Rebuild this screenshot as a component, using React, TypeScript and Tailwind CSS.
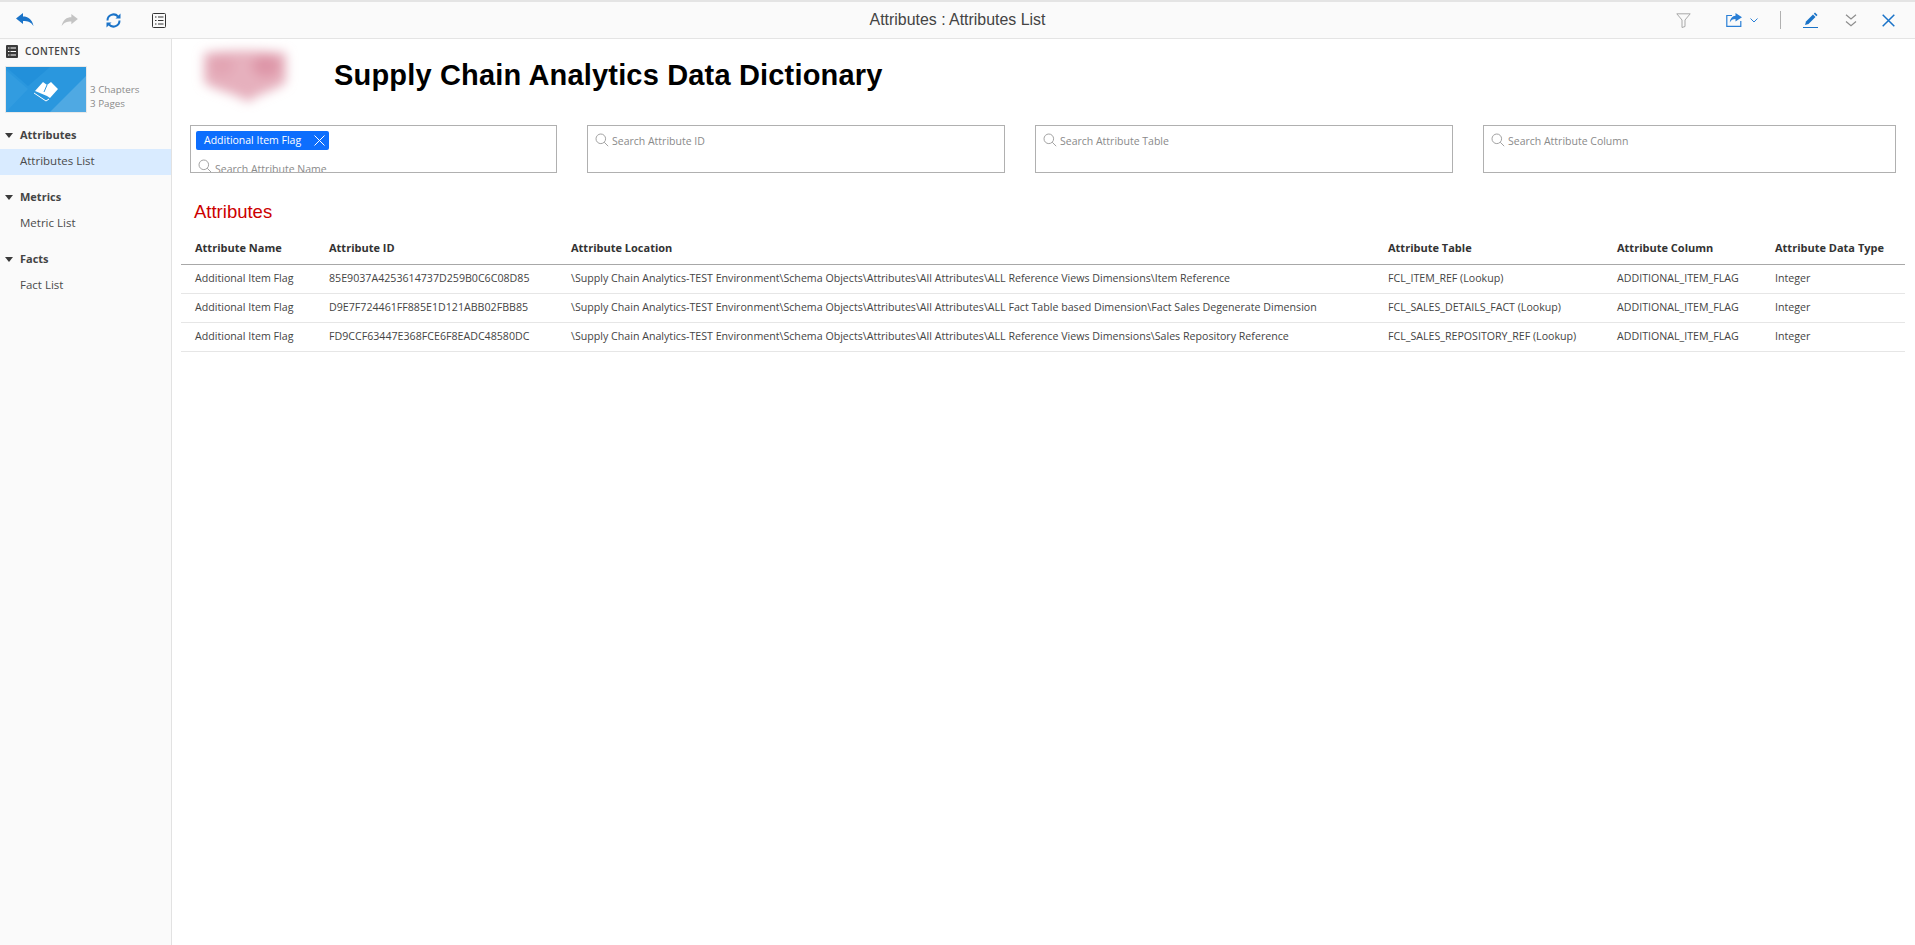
const rows = [
  ['Additional Item Flag', '85E9037A4253614737D259B0C6C08D85', '\\Supply Chain Analytics-TEST Environment\\Schema Objects\\Attributes\\All Attributes\\ALL Reference Views Dimensions\\Item Reference', 'FCL_ITEM_REF (Lookup)', 'ADDITIONAL_ITEM_FLAG', 'Integer'],
  ['Additional Item Flag', 'D9E7F724461FF885E1D121ABB02FBB85', '\\Supply Chain Analytics-TEST Environment\\Schema Objects\\Attributes\\All Attributes\\ALL Fact Table based Dimension\\Fact Sales Degenerate Dimension', 'FCL_SALES_DETAILS_FACT (Lookup)', 'ADDITIONAL_ITEM_FLAG', 'Integer'],
  ['Additional Item Flag', 'FD9CCF63447E368FCE6F8EADC48580DC', '\\Supply Chain Analytics-TEST Environment\\Schema Objects\\Attributes\\All Attributes\\ALL Reference Views Dimensions\\Sales Repository Reference', 'FCL_SALES_REPOSITORY_REF (Lookup)', 'ADDITIONAL_ITEM_FLAG', 'Integer'],
]

const headers = ['Attribute Name', 'Attribute ID', 'Attribute Location', 'Attribute Table', 'Attribute Column', 'Attribute Data Type']

const sections = [
  { title: 'Attributes', items: ['Attributes List'], active: true },
  { title: 'Metrics', items: ['Metric List'], active: false },
  { title: 'Facts', items: ['Fact List'], active: false },
]

function SearchIcon() {
  return (
    <svg width="14" height="14" viewBox="0 0 14 14" fill="none" stroke="#a3a3a3" strokeWidth="1" className="shrink-0">
      <circle cx="5.800" cy="5.800" r="4.800" />
      <path d="M9.200 9.200l4 4" />
    </svg>
  )
}

function ToolbarLeft() {
  return (
    <div className="flex items-center">
      <svg width="18" height="14" viewBox="0 0 18 14" className="ml-[16px]" fill="#1a73c8">
        <path d="M0 5.500 7 0v3.500c5 0 9 2.500 10.500 9.500-2.500-3.800-5.500-5-10.500-5V11z" />
      </svg>
      <svg width="17" height="13" viewBox="0 0 18 14" className="ml-[27px]" fill="#c4c4c4">
        <path d="M18 5.500 11 0v3.500C6 3.500 2 6 .5 13 3 9.200 6 8 11 8v3z" />
      </svg>
      <svg width="17" height="17" viewBox="0 0 17 17" className="ml-[27px]" fill="none" stroke="#1a73c8" strokeWidth="2">
        <path d="M2.500 8.500a6 6 0 0 1 10.500-4" />
        <path d="M14.500 8.500a6 6 0 0 1-10.500 4" />
        <path d="M15.500 1.500v5h-5z" fill="#1a73c8" stroke="none" />
        <path d="M1.500 15.500v-5h5z" fill="#1a73c8" stroke="none" />
      </svg>
      <svg width="14" height="15" viewBox="0 0 14 15" className="ml-[30px]" fill="none" stroke="#333" strokeWidth="1">
        <rect x="0.500" y="0.500" width="13" height="14" rx="1" />
        <path d="M3 4h1.500M6 4h5.500M3 7.500h1.500M6 7.500h5.500M3 11h1.500M6 11h5.500" />
      </svg>
    </div>
  )
}

function ToolbarRight() {
  return (
    <div className="flex items-center">
      <svg width="15" height="15" viewBox="0 0 15 15" fill="none" stroke="#a8a8a8" strokeWidth="1">
        <path d="M.8.800h13.400L9 7v6.500l-3 1V7z" />
      </svg>
      <svg width="18" height="14" viewBox="0 0 18 14" className="ml-[35px]" fill="none" stroke="#2a7fd6" strokeWidth="1.200">
        <path d="M6 2.500H.800v10.800h14V8" />
        <path d="M9.500 0 16 4.300 9.500 8.500V6C6.800 6 5 7 3.800 9.500 4.200 5.500 6.300 3 9.500 2.800z" fill="#2a7fd6" stroke="none" />
      </svg>
      <svg width="8" height="5" viewBox="0 0 8 5" className="ml-[6px]" fill="none" stroke="#2a7fd6" strokeWidth="1">
        <path d="M.5.500 4 4 7.500.500" />
      </svg>
      <div className="ml-[22px] h-[18px] w-px bg-[#b0b0b0]" />
      <svg width="15" height="16" viewBox="0 0 15 16" className="ml-[22px]" fill="#1a73c8">
        <path d="M3 9.500 10 2.500l2.500 2.500-7 7-3.500 1z" />
        <path d="M10.800 1.700 12 .500l2.500 2.500-1.200 1.200z" />
        <rect x="0" y="15" width="15" height="1" />
      </svg>
      <svg width="12" height="13" viewBox="0 0 12 13" className="ml-[27px]" fill="none" stroke="#8d8d8d" strokeWidth="1.200">
        <path d="M1 .800 6 5l5-4.200M1 7.500l5 4.200 5-4.200" />
      </svg>
      <svg width="13" height="13" viewBox="0 0 13 13" className="ml-[25px] mr-[20px]" fill="none" stroke="#1a73c8" strokeWidth="1.500">
        <path d="M.7.700l11.600 11.600M12.300.700.700 12.300" />
      </svg>
    </div>
  )
}

function Sidebar() {
  return (
    <aside className="w-[172px] shrink-0 border-r border-[#e2e2e2] bg-[#fafafa] pt-[5px]">
      <div className="flex items-center pl-[6px]">
        <svg width="12" height="13" viewBox="0 0 12 13">
          <rect width="12" height="13" rx="1" fill="#3a3a3a" />
          <path d="M2 3h1.500M4.500 3H10M2 6.500h1.500M4.500 6.500H10M2 10h1.500M4.500 10H10" stroke="#fff" strokeWidth="1" />
        </svg>
        <span className="ml-[7px] text-[10px] font-semibold leading-[14px] tracking-[0.4px] text-[#444]">CONTENTS</span>
      </div>
      <div className="mt-[8px] flex items-end pl-[5px]">
        <div className="relative h-[47px] w-[82px] overflow-hidden border border-[#e8e8e8] bg-[#2a97de]">
          <svg width="80" height="45" viewBox="0 0 80 45" className="absolute inset-0">
            <path d="M0 3 22 22 0 45z" fill="#329ce0" />
            <path d="M44 45 80 9v36z" fill="#4fa9e3" />
            <path d="M0 0h44L22 19z" fill="#2290da" />
            <path d="M29 24 37 15l4 3 4-3 7 7-8 9-3-2z" fill="#fff" />
            <path d="M41 18 38 25" fill="none" stroke="#2a97de" strokeWidth="1" />
            <path d="M28 26 40 34l3-2" fill="none" stroke="#fff" strokeWidth="1" />
          </svg>
        </div>
        <div className="mb-[2px] ml-[3px] text-[9.800px] leading-[14px] text-[#8a8a8a]">
          <div>3 Chapters</div>
          <div>3 Pages</div>
        </div>
      </div>
      <div className="mt-[10px] flex flex-col gap-[10px]">
        {sections.map((s) => (
          <div key={s.title}>
            <div className="mb-[2px] flex h-[24px] items-center pl-[5px]">
              <span className="h-0 w-0 border-x-[4px] border-t-[5px] border-x-transparent border-t-[#3a3a3a]" />
              <span className="ml-[7px] text-[11px] font-bold text-[#444]">{s.title}</span>
            </div>
            {s.items.map((item) => (
              <div key={item} className={`flex h-[26px] items-center pb-[2px] pl-[20px] text-[11.500px] text-[#4a4a4a] ${s.active ? 'bg-[#d9ebff]' : ''}`}>
                {item}
              </div>
            ))}
          </div>
        ))}
      </div>
    </aside>
  )
}

function SearchBox({ label, className }: { label: string; className: string }) {
  return (
    <div className={`h-[48px] border border-[#b0b0b0] px-[7px] pt-[7px] ${className}`}>
      <div className="flex items-start">
        <SearchIcon />
        <span className="ml-[3px] mt-[1px] text-[10.500px] leading-[14px] text-[#8a8a8a]">{label}</span>
      </div>
    </div>
  )
}

export default function App() {
  return (
    <div className="flex h-[945px] w-[1915px] flex-col overflow-hidden bg-white font-['Open_Sans',sans-serif]">
      <header className="relative flex h-[39px] shrink-0 items-center justify-between border-y border-[#e4e4e4] border-t-2 bg-[#fafafa]">
        <ToolbarLeft />
        <span className="absolute inset-x-0 text-center font-['Liberation_Sans',sans-serif] text-[15.900px] text-[#444]">Attributes : Attributes List</span>
        <ToolbarRight />
      </header>
      <div className="flex min-h-0 flex-1">
        <Sidebar />
        <main className="min-w-0 flex-1">
          <div className="flex h-[86px] items-center">
            <svg width="120" height="90" viewBox="0 0 120 90" className="ml-[12px] mt-[-6px] shrink-0">
              <defs>
                <filter id="logoBlur" x="-30%" y="-30%" width="160%" height="160%">
                  <feGaussianBlur stdDeviation="5.500" />
                </filter>
              </defs>
              <g filter="url(#logoBlur)">
                <path d="M20 19c20-3 58-3 82 0v29c-8 8-26 10-38 20-14-10-36-12-44-20z" fill="#e6b0bd" />
                <ellipse cx="82" cy="32" rx="14" ry="11" fill="#de96a8" />
                <ellipse cx="38" cy="32" rx="12" ry="10" fill="#e2a4b3" />
              </g>
            </svg>
            <h1 className="ml-[30px] mt-[-12px] font-['Liberation_Sans',sans-serif] text-[29px] font-bold tracking-[0.17px] text-black">Supply Chain Analytics Data Dictionary</h1>
          </div>
          <div className="ml-[18px] flex gap-[30px]">
            <div className="relative h-[48px] w-[367px] overflow-hidden border border-[#b0b0b0]">
              <div className="ml-[5px] mt-[5px] flex h-[19px] w-[133px] items-center rounded-[2px] bg-[#0d6efd] pl-[8px] text-[10.500px] text-white">
                Additional Item Flag
                <svg width="11" height="11" viewBox="0 0 11 11" className="ml-[13px]" fill="none" stroke="#fff" strokeWidth="1">
                  <path d="M.5.500l10 10M10.500.500l-10 10" />
                </svg>
              </div>
              <div className="mt-[9px] flex items-start pl-[7px]">
                <SearchIcon />
                <span className="ml-[3px] mt-[3px] text-[10.500px] leading-[14px] text-[#8a8a8a]">Search Attribute Name</span>
              </div>
            </div>
            <SearchBox label="Search Attribute ID" className="w-[418px]" />
            <SearchBox label="Search Attribute Table" className="w-[418px]" />
            <SearchBox label="Search Attribute Column" className="w-[413px]" />
          </div>
          <h2 className="ml-[22px] mt-[27px] font-['Liberation_Sans',sans-serif] text-[18.500px] leading-[24px] text-[#cc0000]">Attributes</h2>
          <table className="ml-[9px] mt-[9px] w-[1724px] table-fixed border-collapse text-[10.650px] text-[#444]">
            <colgroup>
              <col className="w-[134px]" />
              <col className="w-[242px]" />
              <col className="w-[817px]" />
              <col className="w-[229px]" />
              <col className="w-[158px]" />
              <col className="w-[144px]" />
            </colgroup>
            <thead>
              <tr className="h-[31px] border-b border-[#a8a8a8]">
                {headers.map((h) => (
                  <th key={h} className="pl-[14px] text-left text-[11px] font-bold text-[#333]">{h}</th>
                ))}
              </tr>
            </thead>
            <tbody>
              {rows.map((row) => (
                <tr key={row[1]} className="h-[29px] border-b border-[#e6e6e6]">
                  {row.map((cell, i) => (
                    <td key={i} className="whitespace-nowrap pl-[14px]">{cell}</td>
                  ))}
                </tr>
              ))}
            </tbody>
          </table>
        </main>
      </div>
    </div>
  )
}
